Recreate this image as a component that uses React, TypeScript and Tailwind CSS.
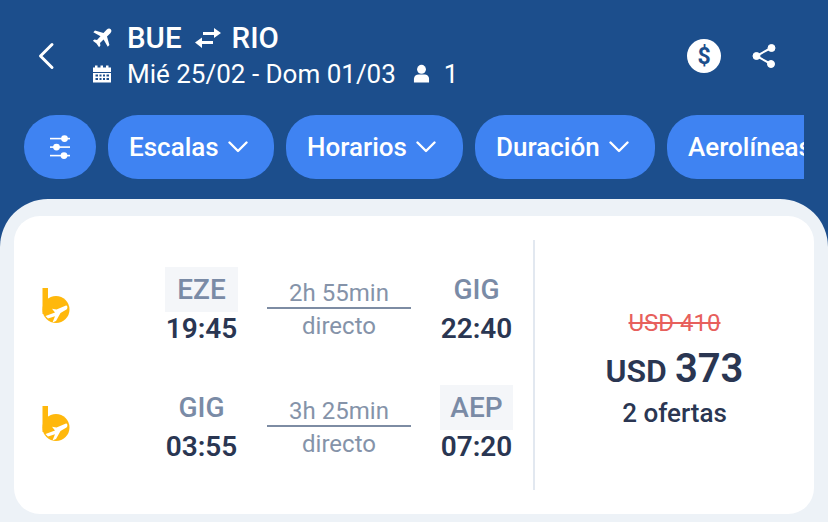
import React from "react";

const Chevron = () => (
  <svg width="20" height="12" viewBox="0 0 20 12" fill="none" stroke="white" strokeWidth="2.4" strokeLinecap="round" strokeLinejoin="round">
    <path d="M1.500 1.500 10 10l8.500-8.500" />
  </svg>
);

const Chip = ({ label, w }: { label: string; w: string }) => (
  <div className={`${w} h-16 shrink-0 rounded-[30px] bg-[#3f83f2] flex items-center gap-[9px] pl-[21px] text-white text-[26px] font-medium whitespace-nowrap`}>
    <span>{label}</span>
    <Chevron />
  </div>
);

const Logo = () => (
  <svg width="28" height="36" viewBox="0 0 28 36" className="block">
    <rect x="0.500" y="0" width="5.500" height="26" fill="#ffb80c" />
    <circle cx="14" cy="21.500" r="13.500" fill="#ffb80c" />
    <path d="M24 17.500 14.500 21.500 10 20.800l3 3.700-9.500 3.500 2.500 2.500L13 28.300 10.500 34.500l3.500-1.500L18.500 25 24.500 21.500C26 20 25.500 17.500 24 17.500Z" fill="white" />
  </svg>
);

const Airport = ({ code, time, shaded }: { code: string; time: string; shaded?: boolean }) => (
  <div className="w-[73px] flex flex-col items-center">
    <div className={`w-[73px] h-[45px] mt-[1px] flex items-center justify-center text-[28px] font-medium text-[#7a8ba6] ${shaded ? "bg-[#f4f6f9]" : ""}`}>
      {code}
    </div>
    <div className="text-[28px] leading-[34px] font-semibold text-[#2a3652] whitespace-nowrap">{time}</div>
  </div>
);

const Leg = ({ from, dep, dur, to, arr, fs, ts }: { from: string; dep: string; dur: string; to: string; arr: string; fs?: boolean; ts?: boolean }) => (
  <div className="flex items-center h-[80px]">
    <div className="w-[29px] mt-[-1px] mr-[94px] shrink-0"><Logo /></div>
    <Airport code={from} time={dep} shaded={fs} />
    <div className="w-[144px] mx-[29px] mt-[6px] flex flex-col items-center text-[#8593a9] text-[24px] leading-[28px]">
      <div className="w-full text-center border-b-2 border-[#7d8ca3] whitespace-nowrap">{dur}</div>
      <div className="pt-[3px]">directo</div>
    </div>
    <Airport code={to} time={arr} shaded={ts} />
  </div>
);

export default function App() {
  return (
    <div className="w-[828px] h-[522px] overflow-hidden bg-[#1c4e8c] font-['Roboto',sans-serif]">
      <header className="h-[115px] flex items-start pt-[22px]">
        <div className="w-[92px] h-[68px] shrink-0 flex items-center pl-[37px]">
          <svg width="18" height="28" viewBox="0 0 18 28" fill="none" stroke="white" strokeWidth="3" strokeLinecap="round" strokeLinejoin="round">
            <path d="M15 2.500 3.500 14 15 25.500" />
          </svg>
        </div>
        <div className="flex-1 text-white">
          <div className="flex items-center h-[32px]">
            <svg width="20" height="20" viewBox="0 0 24 24" fill="white" className="mr-[15px]">
              <path d="M22.500 1.500c-1.400-1.400-3.400-.9-4.700.4l-4 4L3.600 3 1.600 5l8.600 5L6 14.300l-3-.5L1 15.400l4.400 3.100L8.500 23l1.600-2-.5-3 4.300-4.200 5 8.600 2-2-2.900-10.200 4-4c1.300-1.300 1.900-3.300.5-4.700Z" />
            </svg>
            <span className="text-[29.5px] font-medium">BUE</span>
            <svg width="26" height="22" viewBox="0 0 26 22" fill="white" className="ml-[13px] mr-[11px]">
              <path d="M8 5h11V1l7 5-7 5V8H8ZM18 17H7v4l-7-5.500L7 10.500V14h11Z" />
            </svg>
            <span className="text-[29.5px] font-medium">RIO</span>
          </div>
          <div className="flex items-center h-[36px] mt-[2px]">
            <svg width="20" height="20" viewBox="0 0 20 20" className="mr-[15px]">
              <path fill="white" d="M1 3.500h2V1.500h2.500v2h3V1.500h2.500v2h3V1.500H16.500v2H19V8H1Z" />
              <path fill="white" fillRule="evenodd" d="M1 9h18v9.500H1ZM3.500 10.500v2h2.500v-2ZM7.500 10.500v2h2v-2ZM11 10.500v2h2v-2ZM14.500 10.500v2H17v-2ZM3.500 14v2h2.500v-2ZM7.500 14v2h2v-2ZM11 14v2h2v-2ZM14.500 14v2H17v-2Z" />
            </svg>
            <span className="text-[26px]">Mié 25/02 - Dom 01/03</span>
            <svg width="17" height="20" viewBox="0 0 18 20" fill="white" className="ml-[17px] mr-[14px]">
              <circle cx="9" cy="5" r="4.700" />
              <path d="M1 19v-4c0-3 2.500-4.500 5-4.500h6c2.500 0 5 1.500 5 4.500v4Z" />
            </svg>
            <span className="text-[26px]">1</span>
          </div>
        </div>
        <div className="flex items-center gap-[31px] pr-[52px] h-[68px]">
          <div className="w-[34px] h-[34px] rounded-full bg-white flex items-center justify-center text-[#1c4e8c] text-[23px] font-bold leading-none">$</div>
          <svg width="24" height="26" viewBox="0 0 24 26" fill="white" stroke="white">
            <circle cx="19.500" cy="5" r="3.500" />
            <circle cx="4.500" cy="13" r="3.500" />
            <circle cx="19" cy="21" r="3.500" />
            <path d="M19 5 4.500 13 19 21" fill="none" strokeWidth="2" />
          </svg>
        </div>
      </header>

      <div className="ml-[24px] w-[780px] h-16 flex gap-3 overflow-hidden">
        <div className="w-[72px] h-16 shrink-0 rounded-[32px] bg-[#3f83f2] flex items-center justify-center">
          <svg width="22" height="26" viewBox="0 0 22 26" fill="white">
            <rect x="1" y="3.800" width="20" height="1.600" />
            <rect x="1" y="12.300" width="20" height="1.600" />
            <rect x="1" y="20.800" width="20" height="1.600" />
            <circle cx="15.500" cy="4.600" r="3.400" />
            <circle cx="7.500" cy="13.100" r="3.400" />
            <circle cx="15" cy="21.600" r="3.400" />
          </svg>
        </div>
        <Chip label="Escalas" w="w-[166px]" />
        <Chip label="Horarios" w="w-[177px]" />
        <Chip label="Duración" w="w-[180px]" />
        <Chip label="Aerolíneas" w="w-[190px]" />
      </div>

      <main className="mt-5 h-[323px] rounded-t-[48px] bg-[#edf2f7] px-[14px] pt-[17px]">
        <div className="h-[298px] rounded-[26px] bg-white flex items-center pl-[28px]">
          <div className="w-[491px] flex flex-col gap-[38px] shrink-0">
            <Leg from="EZE" dep="19:45" dur="2h 55min" to="GIG" arr="22:40" fs />
            <Leg from="GIG" dep="03:55" dur="3h 25min" to="AEP" arr="07:20" ts />
          </div>
          <div className="w-[2px] h-[250px] bg-[#e2e8f0] shrink-0" />
          <div className="flex-1 flex flex-col items-center text-[#2a3652] mt-[7px]">
            <div className="text-[24px] leading-[26px] text-[#e7605c] line-through">USD 410</div>
            <div className="font-semibold mt-[10px] leading-[46px] whitespace-nowrap">
              <span className="text-[32px]">USD </span>
              <span className="text-[40px]">373</span>
            </div>
            <div className="text-[26px] leading-[27px] font-medium">2 ofertas</div>
          </div>
        </div>
      </main>
    </div>
  );
}
